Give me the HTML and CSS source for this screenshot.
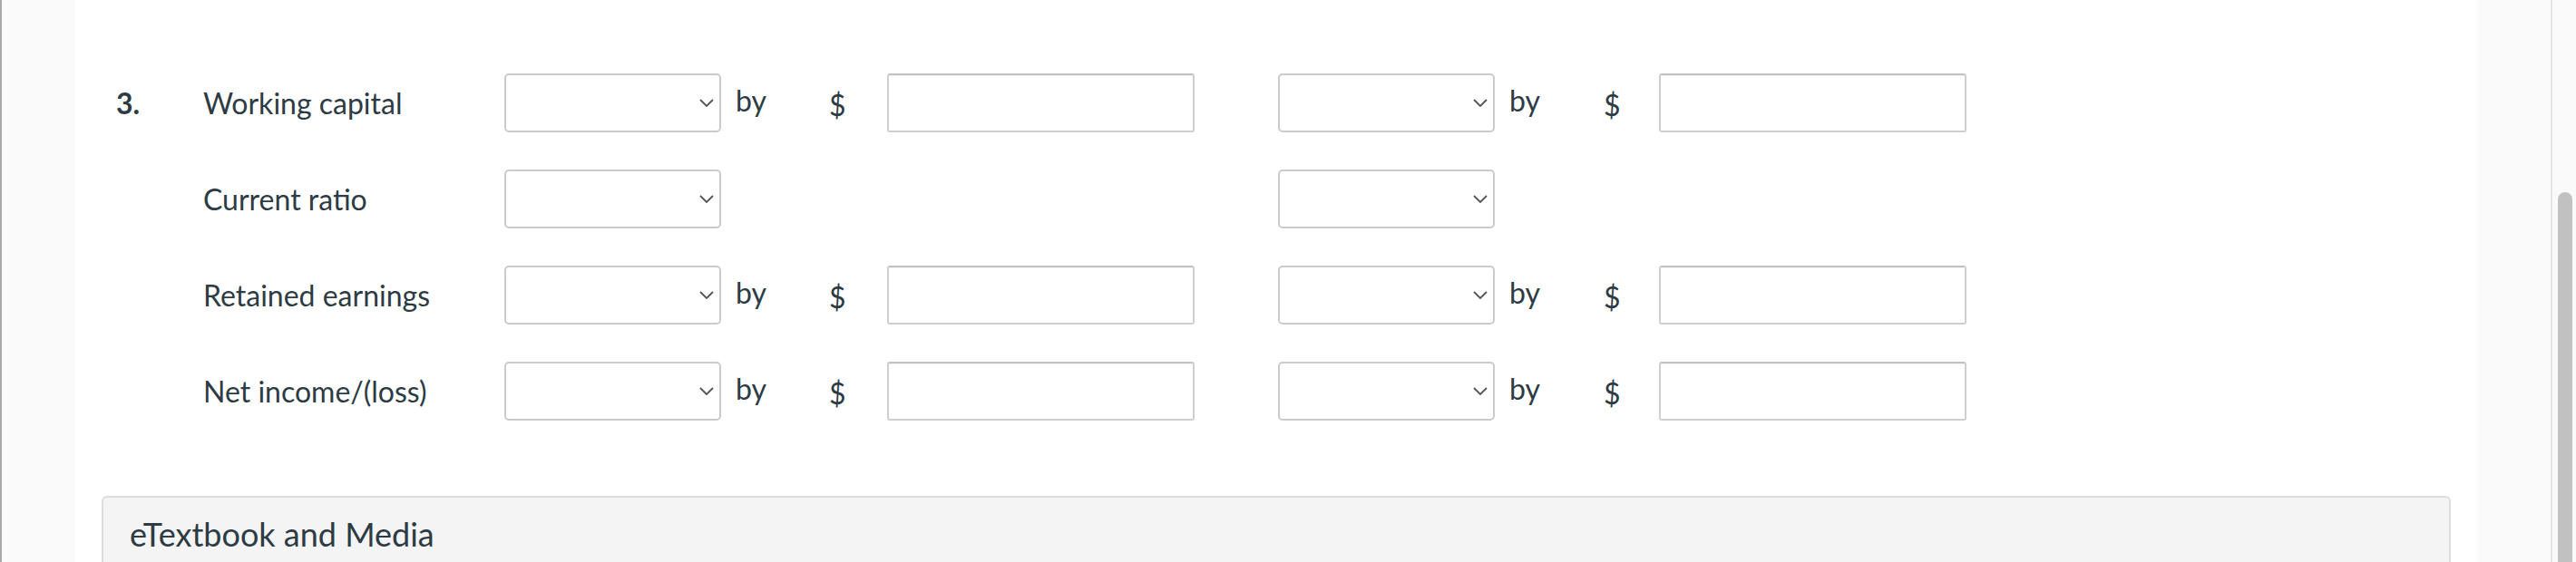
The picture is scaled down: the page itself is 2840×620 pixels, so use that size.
FILE: index.html
```html
<!DOCTYPE html>
<html lang="en">
<head>
<meta charset="utf-8">
<title>Question 3</title>
<link rel="stylesheet" href="styles.css">
</head>
<body>
<div class="page">
  <div class="gutter-left"></div>
  <main class="content">
    <div class="rows">
      <div class="row">
        <div class="num">3.</div>
        <div class="label">Working capital</div>
        <div class="sel"><select aria-label="Working capital change"></select><svg class="chev" viewBox="0 0 16 9"><path d="M1 1l7 7 7-7"/></svg></div>
        <div class="by">by</div>
        <div class="dollar">$</div>
        <input class="amt" type="text" aria-label="Working capital amount">
        <div class="spacer"></div>
        <div class="sel"><select aria-label="Working capital change 2"></select><svg class="chev" viewBox="0 0 16 9"><path d="M1 1l7 7 7-7"/></svg></div>
        <div class="by">by</div>
        <div class="dollar dollar2">$</div>
        <input class="amt" type="text" aria-label="Working capital amount 2">
      </div>
      <div class="row">
        <div class="num"></div>
        <div class="label">Current ratio</div>
        <div class="sel"><select aria-label="Current ratio change"></select><svg class="chev" viewBox="0 0 16 9"><path d="M1 1l7 7 7-7"/></svg></div>
        <div class="by"></div>
        <div class="dollar"></div>
        <div class="amt-empty"></div>
        <div class="spacer"></div>
        <div class="sel"><select aria-label="Current ratio change 2"></select><svg class="chev" viewBox="0 0 16 9"><path d="M1 1l7 7 7-7"/></svg></div>
        <div class="by"></div>
        <div class="dollar dollar2"></div>
        <div class="amt-empty"></div>
      </div>
      <div class="row">
        <div class="num"></div>
        <div class="label">Retained earnings</div>
        <div class="sel"><select aria-label="Retained earnings change"></select><svg class="chev" viewBox="0 0 16 9"><path d="M1 1l7 7 7-7"/></svg></div>
        <div class="by">by</div>
        <div class="dollar">$</div>
        <input class="amt" type="text" aria-label="Retained earnings amount">
        <div class="spacer"></div>
        <div class="sel"><select aria-label="Retained earnings change 2"></select><svg class="chev" viewBox="0 0 16 9"><path d="M1 1l7 7 7-7"/></svg></div>
        <div class="by">by</div>
        <div class="dollar dollar2">$</div>
        <input class="amt" type="text" aria-label="Retained earnings amount 2">
      </div>
      <div class="row">
        <div class="num"></div>
        <div class="label">Net income/(loss)</div>
        <div class="sel"><select aria-label="Net income change"></select><svg class="chev" viewBox="0 0 16 9"><path d="M1 1l7 7 7-7"/></svg></div>
        <div class="by">by</div>
        <div class="dollar">$</div>
        <input class="amt" type="text" aria-label="Net income amount">
        <div class="spacer"></div>
        <div class="sel"><select aria-label="Net income change 2"></select><svg class="chev" viewBox="0 0 16 9"><path d="M1 1l7 7 7-7"/></svg></div>
        <div class="by">by</div>
        <div class="dollar dollar2">$</div>
        <input class="amt" type="text" aria-label="Net income amount 2">
      </div>
    </div>
    <section class="media">
      <div class="media-head">eTextbook and Media</div>
    </section>
  </main>
  <div class="gutter-right"></div>
  <div class="scrollbar"><div class="thumb"></div></div>
</div>
</body>
</html>
```

FILE: styles.css
```css
html, body {
  margin: 0;
  padding: 0;
  height: 620px;
  overflow: hidden;
  background: #ffffff;
  font-family: Lato, "Open Sans", "Liberation Sans", sans-serif;
  color: #2d3b45;
}

.page {
  display: flex;
  height: 620px;
}

.gutter-left {
  width: 81px;
  flex: none;
  background: #fafafa;
  border-left: 2px solid #a9a9a9;
}

.content {
  width: 2648px;
  flex: none;
  background: #ffffff;
  padding-top: 81px;
  box-sizing: border-box;
}

.rows {
  display: flex;
  flex-direction: column;
  gap: 41px;
  padding-left: 45px;
}

.row {
  display: grid;
  grid-template-columns: 96px 332px 239px 119px 64px 339px 92px 239px 120px 61px 339px;
  align-items: center;
  height: 65px;
  font-size: 32px;
}

.num {
  font-weight: 700;
}

.label {
  white-space: nowrap;
}

.sel {
  position: relative;
  height: 65px;
}

.sel select {
  appearance: none;
  -webkit-appearance: none;
  width: 100%;
  height: 100%;
  margin: 0;
  border: 2px solid #cbcbcb;
  border-radius: 5px;
  background: #ffffff;
  box-sizing: border-box;
}

.chev {
  position: absolute;
  right: 8px;
  top: 28px;
  width: 16px;
  height: 9px;
  fill: none;
  stroke: #555555;
  stroke-width: 1.8;
}

.by {
  padding-left: 16px;
  margin-top: -6px;
}

.dollar {
  margin-top: 4px;
}

.amt, .amt-empty {
  width: 339px;
  height: 65px;
  box-sizing: border-box;
  margin: 0;
}

.amt {
  border: 2px solid #cfcfcf;
  border-top-color: #c2c2c2;
  border-radius: 3px;
  background: #ffffff;
  box-shadow: inset 0 1px 1px rgba(0,0,0,0.06);
}

.media {
  margin: 83px 29px 0 29px;
  height: 120px;
  background: #f4f4f4;
  border: 2px solid #dddddd;
  border-bottom: none;
  border-radius: 6px 6px 0 0;
}

.media-head {
  padding: 18px 0 0 29px;
  font-size: 36px;
  color: #2d3b45;
}

.gutter-right {
  width: 81px;
  flex: none;
  background: #fafafa;
  border-right: 2px solid #e4e4e4;
}

.scrollbar {
  flex: 1;
  background: #fafafa;
  position: relative;
}

.thumb {
  position: absolute;
  left: 6px;
  right: 4px;
  top: 212px;
  bottom: 0;
  background: #c1c1c1;
  border-radius: 8px 8px 0 0;
}
```
